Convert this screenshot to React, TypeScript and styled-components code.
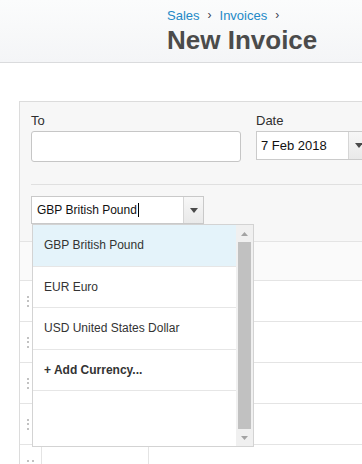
import React from "react";
import styled, { createGlobalStyle } from "styled-components";

const GlobalStyle = createGlobalStyle`
  html, body {
    margin: 0;
    padding: 0;
    background: #ffffff;
    overflow: hidden;
    font-family: "Liberation Sans", Arial, sans-serif;
  }
  * { box-sizing: border-box; }
`;

const Page = styled.div`
  width: 362px;
  height: 464px;
  overflow: hidden;
  background: #ffffff;
`;

const Header = styled.header`
  background: linear-gradient(#fbfcfc, #f4f5f7);
  border-bottom: 1px solid #dadbdd;
  padding: 8px 0 7px 167px;
`;

const Breadcrumb = styled.nav`
  display: flex;
  align-items: center;
  font-size: 13px;
  line-height: 15px;
  color: #2389c7;
`;

const Crumb = styled.span`
  color: #2389c7;
`;

const CrumbSep = styled.span`
  font-size: 12px;
  color: #3c3c50;
  margin: 0 8px 0 8px;
`;

const Title = styled.h1`
  margin: 2px 0 0 0;
  font-size: 26px;
  line-height: 30px;
  font-weight: bold;
  color: #4b4b4b;
  white-space: nowrap;
`;

const Content = styled.main`
  padding: 38px 0 0 19px;
`;

const Panel = styled.section`
  width: 420px;
  border: 1px solid #dcdcdc;
  background: #f7f7f7;
`;

const FormSection = styled.div`
  padding: 11px 11px 17px 11px;
`;

const FieldRow = styled.div`
  display: flex;
  gap: 15px;
`;

const Field = styled.div<{ $width: number }>`
  display: flex;
  flex-direction: column;
  width: ${(p) => p.$width}px;
`;

const Label = styled.label`
  font-size: 13px;
  line-height: 15px;
  color: #2f2f2f;
  margin-bottom: 3px;
`;

const TextInput = styled.div`
  height: 31px;
  background: #ffffff;
  border: 1px solid #c6c6c6;
  border-radius: 3px;
`;

const DateBox = styled.div`
  display: flex;
  height: 29px;
  background: #ffffff;
  border: 1px solid #cbcbcb;
`;

const DateText = styled.div`
  width: 91px;
  padding-left: 4px;
  font-size: 13px;
  line-height: 27px;
  color: #111111;
  white-space: nowrap;
`;

const DropButton = styled.div<{ $width: number }>`
  width: ${(p) => p.$width}px;
  display: flex;
  align-items: center;
  justify-content: center;
  background: linear-gradient(#f7f7f7, #e9e9e9);
  border-left: 1px solid #d6d6d6;
`;

const Divider = styled.hr`
  margin: 22px 0 11px 0;
  border: 0;
  border-top: 1px solid #e0e0e0;
  height: 0;
`;

const ComboWrap = styled.div`
  position: relative;
  width: 173px;
`;

const Combo = styled.div`
  display: flex;
  height: 28px;
  background: #ffffff;
  border: 1px solid #c9c9c9;
`;

const ComboText = styled.div`
  flex: 1;
  display: flex;
  align-items: center;
  padding-left: 5px;
  font-size: 12px;
  color: #111111;
  white-space: nowrap;
`;

const Caret = styled.span`
  display: inline-block;
  width: 1px;
  height: 14px;
  background: #000000;
  margin-left: 1px;
`;

const Dropdown = styled.div`
  position: absolute;
  top: 28px;
  left: 1px;
  width: 222px;
  height: 223px;
  display: flex;
  background: #ffffff;
  border: 1px solid #d3d3d3;
  z-index: 10;
`;

const OptionList = styled.ul`
  flex: 1;
  margin: 0;
  padding: 0;
  list-style: none;
`;

const Option = styled.li<{ $active?: boolean; $bold?: boolean }>`
  height: 41.5px;
  display: flex;
  align-items: center;
  padding-left: 11px;
  font-size: 12px;
  color: #333333;
  font-weight: ${(p) => (p.$bold ? "bold" : "normal")};
  background: ${(p) => (p.$active ? "#e4f3fa" : "#ffffff")};
  border-bottom: 1px solid #e6e6e6;
  white-space: nowrap;
`;

const Scrollbar = styled.div`
  width: 17px;
  display: flex;
  flex-direction: column;
  background: #f0f0f0;
`;

const ScrollArrow = styled.div`
  height: 17px;
  display: flex;
  align-items: center;
  justify-content: center;
`;

const ScrollThumb = styled.div`
  flex: 1;
  margin: 0 2px;
  background: #c1c1c1;
`;

const Table = styled.div`
  display: flex;
  flex-direction: column;
`;

const HeadRow = styled.div`
  height: 39px;
  border-top: 1px solid #e4e4e4;
  background: #fafafa;
`;

const Row = styled.div`
  display: flex;
  height: 41px;
  border-top: 1px solid #e4e4e4;
  background: #ffffff;
`;

const HandleCell = styled.div`
  width: 22px;
  display: flex;
  align-items: center;
  justify-content: center;
  border-right: 1px solid #e4e4e4;
`;

const Cell = styled.div<{ $width: number }>`
  width: ${(p) => p.$width}px;
  border-right: 1px solid #e4e4e4;
`;

const DotGrid = styled.div`
  display: grid;
  grid-template-columns: 2px 2px;
  grid-auto-rows: 2px;
  column-gap: 3px;
  row-gap: 2.5px;
`;

const Dot = styled.span`
  width: 2px;
  height: 2px;
  background: #c2c2c2;
`;

const Triangle = ({ dir, color, w, h }: { dir: "up" | "down"; color: string; w: number; h: number }) => (
  <svg width={w} height={h} viewBox={`0 0 ${w} ${h}`}>
    {dir === "down" ? (
      <polygon points={`0,0 ${w},0 ${w / 2},${h}`} fill={color} />
    ) : (
      <polygon points={`0,${h} ${w},${h} ${w / 2},0`} fill={color} />
    )}
  </svg>
);

const Handle = () => (
  <DotGrid>
    {Array.from({ length: 6 }).map((_, i) => (
      <Dot key={i} />
    ))}
  </DotGrid>
);

const currencies = [
  { label: "GBP British Pound", active: true },
  { label: "EUR Euro" },
  { label: "USD United States Dollar" },
  { label: "+ Add Currency...", bold: true },
];

export default function App() {
  return (
    <Page>
      <GlobalStyle />
      <Header>
        <Breadcrumb>
          <Crumb>Sales</Crumb>
          <CrumbSep>›</CrumbSep>
          <Crumb>Invoices</Crumb>
          <CrumbSep>›</CrumbSep>
        </Breadcrumb>
        <Title>New Invoice</Title>
      </Header>
      <Content>
        <Panel>
          <FormSection>
            <FieldRow>
              <Field $width={210}>
                <Label>To</Label>
                <TextInput />
              </Field>
              <Field $width={113}>
                <Label>Date</Label>
                <DateBox>
                  <DateText>7 Feb 2018</DateText>
                  <DropButton $width={20}>
                    <Triangle dir="down" color="#4a4a4a" w={8} h={5} />
                  </DropButton>
                </DateBox>
              </Field>
            </FieldRow>
            <Divider />
            <ComboWrap>
              <Combo>
                <ComboText>
                  GBP British Pound
                  <Caret />
                </ComboText>
                <DropButton $width={20}>
                  <Triangle dir="down" color="#4a4a4a" w={8} h={5} />
                </DropButton>
              </Combo>
              <Dropdown>
                <OptionList>
                  {currencies.map((c) => (
                    <Option key={c.label} $active={c.active} $bold={c.bold}>
                      {c.label}
                    </Option>
                  ))}
                </OptionList>
                <Scrollbar>
                  <ScrollArrow>
                    <Triangle dir="up" color="#a3a3a3" w={7} h={4} />
                  </ScrollArrow>
                  <ScrollThumb />
                  <ScrollArrow>
                    <Triangle dir="down" color="#a3a3a3" w={7} h={4} />
                  </ScrollArrow>
                </Scrollbar>
              </Dropdown>
            </ComboWrap>
          </FormSection>
          <Table>
            <HeadRow />
            {Array.from({ length: 5 }).map((_, i) => (
              <Row key={i}>
                <HandleCell>
                  <Handle />
                </HandleCell>
                <Cell $width={107} />
              </Row>
            ))}
          </Table>
        </Panel>
      </Content>
    </Page>
  );
}
